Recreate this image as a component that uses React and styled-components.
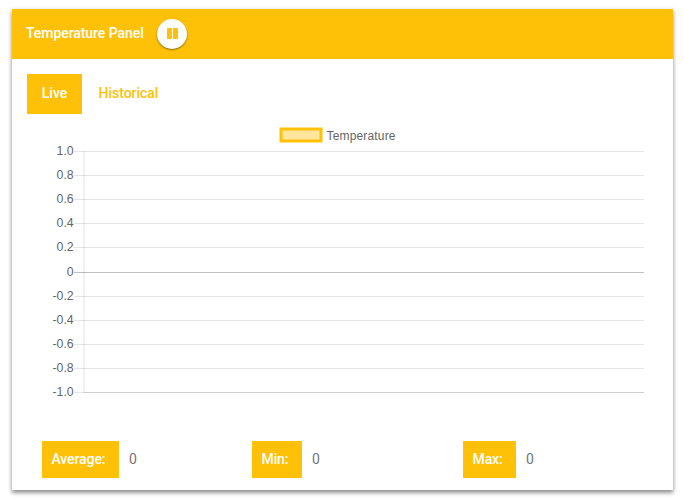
import React from "react";
import styled, { createGlobalStyle } from "styled-components";

const amber = "#ffc107";

const GlobalStyle = createGlobalStyle`
  body {
    margin: 0;
    background: #fff;
    font-family: Roboto, sans-serif;
    font-size: 14px;
    color: #757575;
  }
`;

const Page = styled.main`
  box-sizing: border-box;
  min-height: 100vh;
  padding: 9px 11px 11px 12px;
  background: #fff;
`;

const Panel = styled.section`
  height: 481px;
  background: #fff;
  box-shadow: 0 3px 4px rgba(0, 0, 0, 0.36), 0 1px 5px rgba(0, 0, 0, 0.16);
`;

const Header = styled.header`
  display: flex;
  align-items: center;
  box-sizing: border-box;
  height: 50px;
  padding: 0 15px 0 14px;
  gap: 13px;
  background: ${amber};
  color: #fff;
`;

const Title = styled.h1`
  margin: 0;
  width: 118px;
  padding-bottom: 2px;
  font-size: 14px;
  font-weight: 500;
  line-height: 20px;
  letter-spacing: -0.06px;
  white-space: nowrap;
`;

const PauseButton = styled.button`
  display: flex;
  align-items: center;
  justify-content: center;
  box-sizing: border-box;
  width: 30px;
  height: 30px;
  padding: 0 0 1px;
  border: 0;
  border-radius: 50%;
  background: #fff;
  box-shadow: 0 1px 2px rgba(0, 0, 0, 0.45);
`;

const PauseIcon = styled.svg`
  display: block;
  width: 11px;
  height: 11px;
  fill: ${amber};
`;

const Tabs = styled.nav`
  display: flex;
  height: 40px;
  padding: 15px 15px 0;
`;

const Tab = styled.button`
  width: ${(p) => p.$width}px;
  height: 40px;
  padding: 0 0 2px;
  border: 0;
  background: ${(p) => (p.$active ? amber : "transparent")};
  color: ${(p) => (p.$active ? "#fff" : amber)};
  font: 500 14px/20px Roboto, sans-serif;
  letter-spacing: -0.03px;
`;

const Chart = styled.svg`
  display: block;
  width: 661px;
  height: 327px;
  font-family: "Liberation Sans", Arial, sans-serif;
  font-size: 12px;
  fill: #666;
`;

const Stats = styled.div`
  display: grid;
  grid-template-columns: 210px 211px 1fr;
  padding-left: 30px;
`;

const Stat = styled.div`
  display: flex;
  align-items: center;
  height: 37px;
`;

const StatLabel = styled.span`
  box-sizing: border-box;
  width: ${(p) => p.$width}px;
  height: 37px;
  padding-left: 9.5px;
  background: ${amber};
  color: #fff;
  font-weight: 500;
  line-height: 37px;
  letter-spacing: -0.1px;
`;

const StatValue = styled.span`
  margin-left: 10px;
  line-height: 37px;
`;

const ticks = [
  ["1.0", 151],
  ["0.8", 175],
  ["0.6", 199],
  ["0.4", 223],
  ["0.2", 247],
  ["0", 272],
  ["-0.2", 296],
  ["-0.4", 320],
  ["-0.6", 344],
  ["-0.8", 368],
  ["-1.0", 392],
];

const stats = [
  { label: "Average:", width: 77 },
  { label: "Min:", width: 50 },
  { label: "Max:", width: 53 },
];

function TemperatureChart() {
  return (
    <Chart viewBox="12 114 661 327">
      <rect x="281" y="129" width="40" height="12" fill={amber} fillOpacity="0.4" stroke={amber} strokeWidth="3" />
      <text x="326.5" y="140" textLength="69">Temperature</text>
      {ticks.map(([label, y]) => (
        <g key={label}>
          <text x="73.7" y={y + 4} textAnchor="end" fontSize="12.3">{label}</text>
          <rect x="74" y={y} width="570" height="1" fill="#000" fillOpacity={label === "0" ? 0.25 : 0.1} />
        </g>
      ))}
      <rect x="83" y="151" width="2" height="242" fill="#000" fillOpacity="0.055" />
      <rect x="84" y="392" width="560" height="1" fill="#000" fillOpacity="0.1" />
    </Chart>
  );
}

export default function App() {
  return (
    <Page>
      <GlobalStyle />
      <Panel>
        <Header>
          <Title>Temperature Panel</Title>
          <PauseButton aria-label="Pause">
            <PauseIcon viewBox="0 0 11 11">
              <rect x="0" y="0" width="5" height="11" rx="0.5" />
              <rect x="6" y="0" width="5" height="11" rx="0.5" />
            </PauseIcon>
          </PauseButton>
        </Header>
        <Tabs>
          <Tab $active $width={55}>Live</Tab>
          <Tab $width={93}>Historical</Tab>
        </Tabs>
        <TemperatureChart />
        <Stats>
          {stats.map(({ label, width }) => (
            <Stat key={label}>
              <StatLabel $width={width}>{label}</StatLabel>
              <StatValue>0</StatValue>
            </Stat>
          ))}
        </Stats>
      </Panel>
    </Page>
  );
}
